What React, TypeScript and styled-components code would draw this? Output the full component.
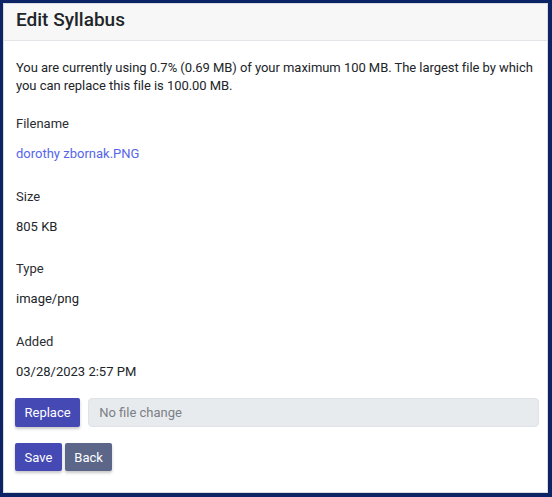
import React from "react";
import styled, { createGlobalStyle } from "styled-components";

const Global = createGlobalStyle`
  html, body { margin: 0; padding: 0; }
  body {
    background: #0c2466;
    font-family: Roboto, "Noto Sans", "Liberation Sans", sans-serif;
    color: #212529;
  }
  * { box-sizing: border-box; }
`;

const Page = styled.div`
  padding: 3px 4px 4px 3px;
  height: 497px;
`;

const Card = styled.div`
  background: #ffffff;
  border: 1px solid #d8dbe0;
  height: 100%;
  display: flex;
  flex-direction: column;
`;

const Header = styled.div`
  background: #f7f7f7;
  border-bottom: 1px solid #e2e4e7;
  height: 37px;
  padding: 6px 12px 0;
`;

const Title = styled.h1`
  margin: 0;
  font-size: 19px;
  font-weight: 500;
  color: #212529;
  line-height: 19px;
`;

const Body = styled.div`
  padding: 17.5px 8px 0 12px;
  font-size: 13px;
  line-height: 19px;
`;

const Intro = styled.p`
  margin: 0 0 19.5px;
  line-height: 18px;
  letter-spacing: -0.05px;
`;

const FieldList = styled.div`
  display: flex;
  flex-direction: column;
  gap: 23.5px;
  margin-bottom: 17.5px;
`;

const Field = styled.div`
  display: flex;
  flex-direction: column;
  gap: 11px;
`;

const Label = styled.div`
  color: #2a2d31;
`;

const Value = styled.div<{ $link?: boolean }>`
  color: ${(p) => (p.$link ? "#5566e8" : "#212529")};
`;

const Row = styled.div<{ $gap: number }>`
  display: flex;
  align-items: stretch;
  gap: ${(p) => p.$gap}px;
  margin-left: -1px;
`;

const Button = styled.button<{ $variant?: "primary" | "secondary"; $h: number }>`
  font-family: inherit;
  font-size: 13px;
  color: #ffffff;
  border: none;
  border-radius: 2px;
  height: ${(p) => p.$h}px;
  padding: 0 9.5px;
  background: ${(p) => (p.$variant === "secondary" ? "#5c6689" : "#4549b4")};
  box-shadow: 0 2px 3px rgba(0, 0, 0, 0.22);
  cursor: pointer;
`;

const FileBox = styled.div`
  flex: 1;
  height: 29px;
  background: #e8ebee;
  border: 1px solid #dfe2e6;
  border-radius: 4px;
  display: flex;
  align-items: center;
  padding: 0 10px;
  color: #7a7f85;
  font-size: 13px;
`;

const Actions = styled(Row)`
  margin-top: 16px;
`;

const fields: { label: string; value: string; link?: boolean }[] = [
  { label: "Filename", value: "dorothy zbornak.PNG", link: true },
  { label: "Size", value: "805 KB" },
  { label: "Type", value: "image/png" },
  { label: "Added", value: "03/28/2023 2:57 PM" },
];

export default function App() {
  return (
    <>
      <Global />
      <Page>
        <Card>
          <Header>
            <Title>Edit Syllabus</Title>
          </Header>
          <Body>
            <Intro>
              You are currently using 0.7% (0.69 MB) of your maximum 100 MB. The largest file by which
              you can replace this file is 100.00 MB.
            </Intro>
            <FieldList>
              {fields.map((f) => (
                <Field key={f.label}>
                  <Label>{f.label}</Label>
                  <Value $link={f.link}>{f.value}</Value>
                </Field>
              ))}
            </FieldList>
            <Row $gap={8}>
              <Button $h={29}>Replace</Button>
              <FileBox>No file change</FileBox>
            </Row>
            <Actions $gap={3}>
              <Button $h={28}>Save</Button>
              <Button $h={28} $variant="secondary">Back</Button>
            </Actions>
          </Body>
        </Card>
      </Page>
    </>
  );
}
